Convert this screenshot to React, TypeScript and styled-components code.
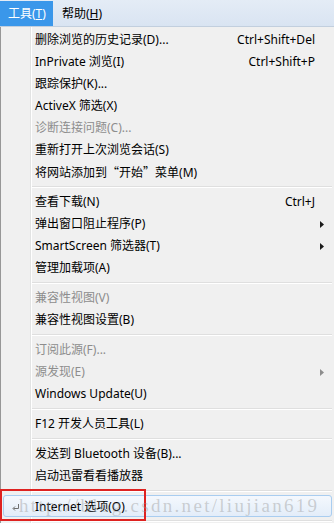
import React from 'react';
import styled, {createGlobalStyle, css} from 'styled-components';

type Entry = {
    label?: React.ReactNode;
    shortcut?: string;
    disabled?: boolean;
    submenu?: boolean;
    sep?: boolean;
};

const GlobalStyle = createGlobalStyle`
    html, body {
        margin: 0;
        padding: 0;
        background: #f0f0f0;
        overflow: hidden;
    }
    body {
        font-family: "Noto Sans", "Noto Sans CJK SC", sans-serif;
        font-size: 12px;
        color: #000;
    }
`;

const Window = styled.div`
    width: 334px;
    height: 523px;
    overflow: hidden;
`;

const MenuBar = styled.div`
    display: flex;
    align-items: flex-end;
    height: 27px;
    background: linear-gradient(#e4ecf6, #d9e4f2);
    border-bottom: 1px solid #c2cfde;
    box-sizing: border-box;
`;

const Tab = styled.div<{$active?: boolean}>`
    display: flex;
    align-items: center;
    height: 24px;
    padding: 0 7px 1px 8px;
    color: ${p => p.$active ? '#fff' : '#000'};
    background: ${p => p.$active ? '#3a97ea' : 'transparent'};
    margin-right: 1px;
`;

const Dropdown = styled.div`
    position: relative;
    border-left: 1px solid #979797;
    padding: 2px 2px 0 2px;
    background: linear-gradient(to right,
        #f0f0f0 29px, #e2e3e3 29px, #e2e3e3 30px,
        #ffffff 30px, #ffffff 31px, #f0f0f0 31px);
`;

const Item = styled.div<{$disabled?: boolean; $hot?: boolean}>`
    display: grid;
    grid-template-columns: 32px 1fr auto 17px;
    align-items: center;
    height: 22px;
    box-sizing: border-box;
    white-space: nowrap;
    color: ${p => p.$disabled ? '#8d8d8d' : '#000'};

    ${p => p.$hot && css`
        grid-template-columns: 31px 1fr auto 16px;
        border: 1px solid #a9cdf0;
        border-radius: 3px;
        background: linear-gradient(#f4f8fd, #e3edf9);
    `}
`;

const Gutter = styled.span`
    display: flex;
    align-items: center;
    padding-left: 8px;
`;

const Label = styled.span`
    line-height: 22px;
`;

const Quote = styled.span`
    font-family: "Noto Sans CJK SC", sans-serif;
`;

const Shortcut = styled.span`
    line-height: 22px;
`;

const Arrow = styled.span`
    display: flex;
    align-items: center;
    padding-left: 5px;
`;

const Separator = styled.div`
    height: 8px;
    margin-left: 29px;
    display: flex;
    flex-direction: column;
    justify-content: center;

    &::before {
        content: '';
        height: 1px;
        background: #dfdfdf;
    }
    &::after {
        content: '';
        height: 1px;
        background: #ffffff;
    }
`;

// annotation frame drawn over the last item
const RedBox = styled.div`
    position: absolute;
    left: -1px;
    top: 462px;
    width: 146px;
    height: 32px;
    box-sizing: border-box;
    border: 2px solid #de2220;
    pointer-events: none;
`;

const Watermark = styled.div`
    position: absolute;
    left: 18px;
    top: 468px;
    font-family: "Liberation Serif", serif;
    font-size: 19px;
    line-height: 22px;
    letter-spacing: 2.3px;
    color: rgba(150, 150, 150, 0.42);
    white-space: nowrap;
    pointer-events: none;
`;

const entries: Entry[] = [
    {label: '删除浏览的历史记录(D)...', shortcut: 'Ctrl+Shift+Del'},
    {label: 'InPrivate 浏览(I)', shortcut: 'Ctrl+Shift+P'},
    {label: '跟踪保护(K)...'},
    {label: 'ActiveX 筛选(X)'},
    {label: '诊断连接问题(C)...', disabled: true},
    {label: '重新打开上次浏览会话(S)'},
    {label: <>将网站添加到<Quote>“</Quote>开始<Quote>”</Quote>菜单(M)</>},
    {sep: true},
    {label: '查看下载(N)', shortcut: 'Ctrl+J'},
    {label: '弹出窗口阻止程序(P)', submenu: true},
    {label: 'SmartScreen 筛选器(T)', submenu: true},
    {label: '管理加载项(A)'},
    {sep: true},
    {label: '兼容性视图(V)', disabled: true},
    {label: '兼容性视图设置(B)'},
    {sep: true},
    {label: '订阅此源(F)...', disabled: true},
    {label: '源发现(E)', disabled: true, submenu: true},
    {label: 'Windows Update(U)'},
    {sep: true},
    {label: 'F12 开发人员工具(L)'},
    {sep: true},
    {label: '发送到 Bluetooth 设备(B)...'},
    {label: '启动迅雷看看播放器'},
    {sep: true},
];

const SubArrow = ({disabled}: {disabled?: boolean}) => (
    <svg width="4" height="7" viewBox="0 0 4 7">
        <polygon points="0,0 4,3.5 0,7" fill={disabled ? '#8d8d8d' : '#1a1a1a'}/>
    </svg>
);

const ReturnIcon = () => (
    <svg width="8" height="7" viewBox="0 0 8 7">
        <path d="M6.5 0 V4.5 H1.5" stroke="#707070" strokeWidth="1" fill="none"/>
        <path d="M3 2.5 L1 4.5 L3 6.5" stroke="#707070" strokeWidth="1" fill="none"/>
    </svg>
);

export default function App() {
    return (
        <Window>
            <GlobalStyle/>
            <MenuBar>
                <Tab $active>工具(<u>T</u>)</Tab>
                <Tab>帮助(<u>H</u>)</Tab>
            </MenuBar>
            <Dropdown>
                {entries.map((e, i) => e.sep ? (
                    <Separator key={i}/>
                ) : (
                    <Item key={i} $disabled={e.disabled}>
                        <Gutter/>
                        <Label>{e.label}</Label>
                        <Shortcut>{e.shortcut}</Shortcut>
                        <Arrow>{e.submenu && <SubArrow disabled={e.disabled}/>}</Arrow>
                    </Item>
                ))}
                <Item $hot>
                    <Gutter><ReturnIcon/></Gutter>
                    <Label>Internet 选项(O)</Label>
                    <Shortcut/>
                    <Arrow/>
                </Item>
                <Separator/>
                <RedBox/>
                <Watermark>http://blog.csdn.net/liujian619</Watermark>
            </Dropdown>
        </Window>
    );
}
